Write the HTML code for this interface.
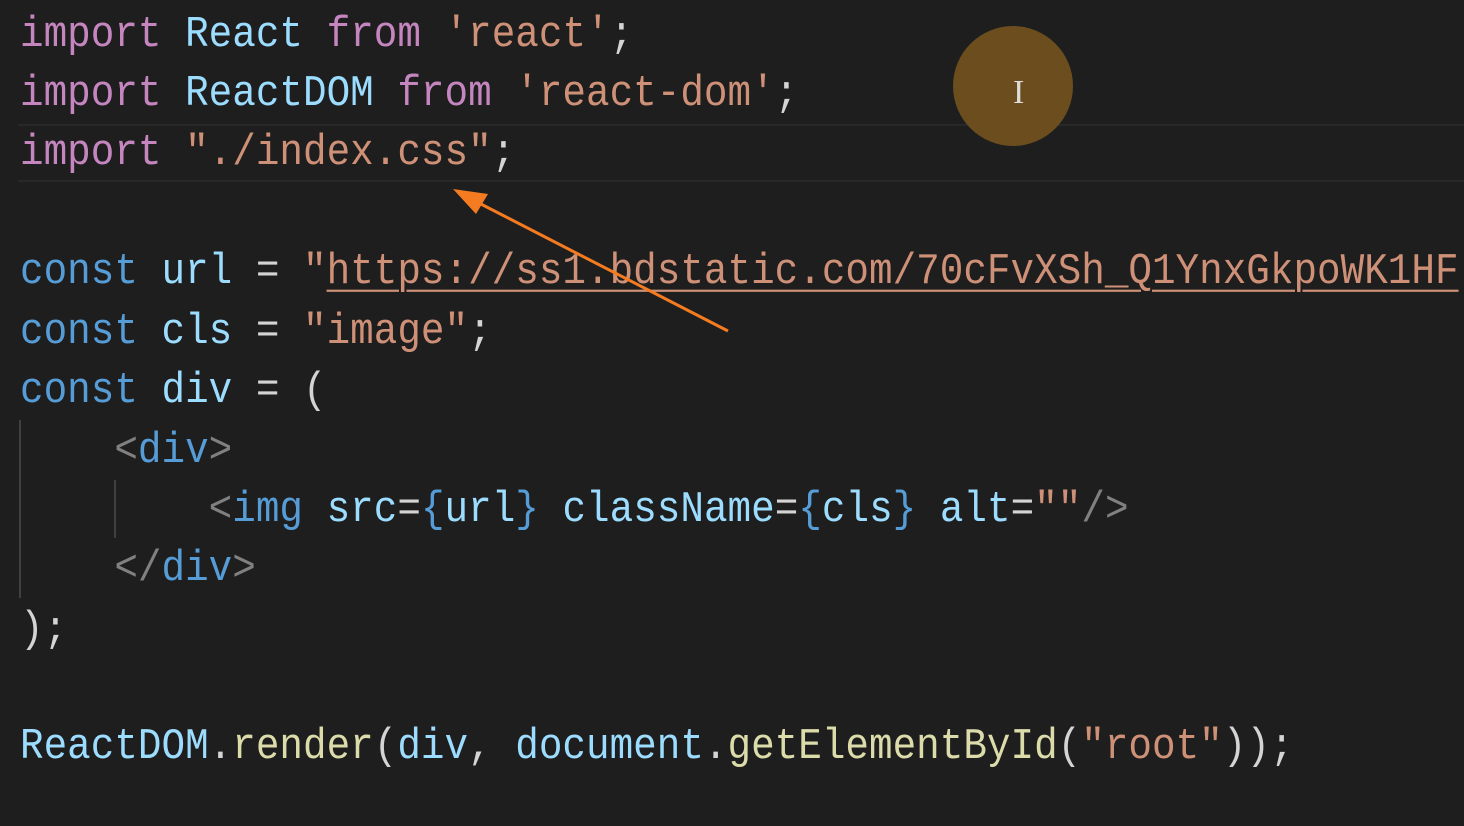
<!DOCTYPE html>
<html><head><meta charset="utf-8"><style>
html,body{margin:0;padding:0;background:#1e1e1e;width:1464px;height:826px;overflow:hidden;position:relative}
.l{position:absolute;left:20px;height:59px;line-height:59px;font-family:"Liberation Mono",monospace;font-size:39.3px;color:#d4d4d4;white-space:pre;transform:scaleY(1.1);transform-origin:0 50%}
.k{color:#c586c0}.v{color:#9cdcfe}.s{color:#ce9178}.b{color:#569cd6}.f{color:#dcdcaa}.g{color:#808080}
.u{text-decoration:underline;text-decoration-thickness:2px;text-underline-offset:6px}
</style></head><body>
<div style="position:absolute;left:18px;top:124px;width:1446px;height:54px;border-top:2px solid #282828;border-bottom:2px solid #282828"></div>
<div style="position:absolute;left:19px;top:420px;width:2px;height:178px;background:#404040"></div>
<div style="position:absolute;left:114px;top:480px;width:2px;height:58px;background:#404040"></div>
<div class="l" style="top:5px"><span class="k">import</span> <span class="v">React</span> <span class="k">from</span> <span class="s">'react'</span>;</div>
<div class="l" style="top:64px"><span class="k">import</span> <span class="v">ReactDOM</span> <span class="k">from</span> <span class="s">'react-dom'</span>;</div>
<div class="l" style="top:123px"><span class="k">import</span> <span class="s">"./index.css"</span>;</div>
<div class="l" style="top:242px;width:1444px;overflow:hidden"><span class="b">const</span> <span class="v">url</span> = <span class="s">"<span class="u">https://ss1.bdstatic.com/70cFvXSh_Q1YnxGkpoWK1HF</span></span></div>
<div class="l" style="top:302px"><span class="b">const</span> <span class="v">cls</span> = <span class="s">"image"</span>;</div>
<div class="l" style="top:361px"><span class="b">const</span> <span class="v">div</span> = (</div>
<div class="l" style="top:421px">    <span class="g">&lt;</span><span class="b">div</span><span class="g">&gt;</span></div>
<div class="l" style="top:480px">        <span class="g">&lt;</span><span class="b">img</span> <span class="v">src</span>=<span class="b">{</span><span class="v">url</span><span class="b">}</span> <span class="v">className</span>=<span class="b">{</span><span class="v">cls</span><span class="b">}</span> <span class="v">alt</span>=<span class="s">""</span><span class="g">/&gt;</span></div>
<div class="l" style="top:539px">    <span class="g">&lt;/</span><span class="b">div</span><span class="g">&gt;</span></div>
<div class="l" style="top:600px">);</div>
<div class="l" style="top:717px"><span class="v">ReactDOM</span>.<span class="f">render</span>(<span class="v">div</span>, <span class="v">document</span>.<span class="f">getElementById</span>(<span class="s">"root"</span>));</div>
<div style="position:absolute;left:953px;top:26px;width:120px;height:120px;border-radius:50%;background:#6b4d1e"></div>
<div style="position:absolute;left:1013px;top:76px;font-family:'Liberation Serif',serif;font-size:34px;color:#ddd;line-height:34px">I</div>
<svg style="position:absolute;left:0;top:0" width="1464" height="826">
<line x1="728" y1="331" x2="475" y2="201" stroke="#f47b20" stroke-width="3"/>
<polygon points="453,189 488,194 476,214" fill="#f47b20"/>
</svg>
</body></html>
